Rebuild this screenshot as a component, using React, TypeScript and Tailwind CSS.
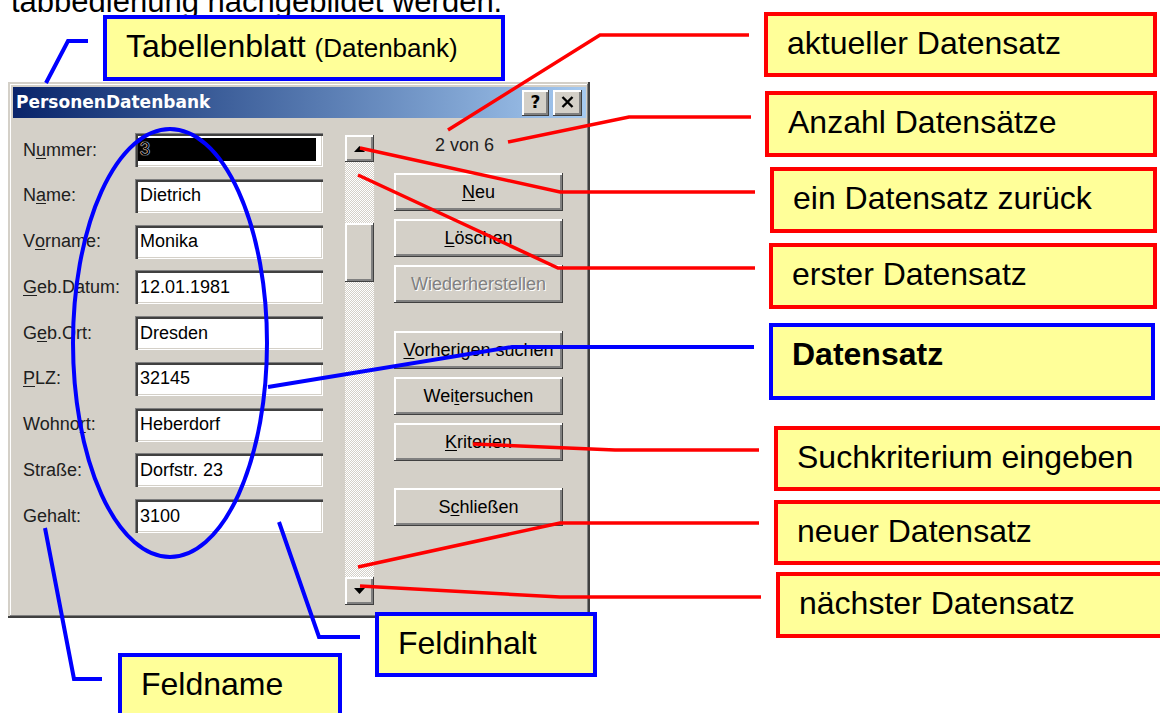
import React from 'react';

// Win2000 style borders
const raised = 'shadow-[inset_-1px_-1px_#404040,inset_2px_2px_#fff,inset_-3px_-3px_#808080]';
const sunken = 'shadow-[inset_1px_1px_#808080,inset_3px_3px_#404040,inset_-1px_-1px_#fff,inset_-2px_-2px_#d4d0c8]';
const frame = 'shadow-[inset_-2px_-2px_#404040,inset_2px_2px_#d4d0c8,inset_-3px_-3px_#808080,inset_3px_3px_#fff]';

const fields = [
  { label: 'Nummer:', key: 1, value: '3' },
  { label: 'Name:', key: 1, value: 'Dietrich' },
  { label: 'Vorname:', key: 1, value: 'Monika' },
  { label: 'Geb.Datum:', key: 0, value: '12.01.1981' },
  { label: 'Geb.Ort:', key: 1, value: 'Dresden' },
  { label: 'PLZ:', key: 0, value: '32145' },
  { label: 'Wohnort:', key: 5, value: 'Heberdorf' },
  { label: 'Straße:', key: -1, value: 'Dorfstr. 23' },
  { label: 'Gehalt:', key: -1, value: '3100' },
];

function Mnemonic({ text, at }: { text: string; at: number }) {
  if (at < 0) return <>{text}</>;
  return (
    <>
      {text.slice(0, at)}
      <span className="underline underline-offset-2">{text[at]}</span>
      {text.slice(at + 1)}
    </>
  );
}

function WinButton({ text, at, disabled, className = '' }: { text: string; at: number; disabled?: boolean; className?: string }) {
  return (
    <div className={`h-[38px] flex items-center justify-center bg-[#d4d0c8] ${raised} ${className}`}>
      {disabled ? (
        <span className="text-[#808080] [text-shadow:1px_1px_0_#fff]">{text}</span>
      ) : (
        <span className="text-black">
          <Mnemonic text={text} at={at} />
        </span>
      )}
    </div>
  );
}

function Arrow({ up }: { up?: boolean }) {
  return (
    <svg width="11" height="6" viewBox="0 0 11 6">
      {up ? <polygon points="0,6 11,6 5.5,0" fill="#000" /> : <polygon points="0,0 11,0 5.5,6" fill="#000" />}
    </svg>
  );
}

function Dialog() {
  return (
    <div className={`absolute left-[8px] top-[82px] w-[582px] h-[536px] bg-[#d4d0c8] ${frame} pt-[5px] pl-[5px] pr-[4px] font-['Liberation_Sans',Arial,sans-serif] text-[18px] text-black`}>
      {/* Title bar */}
      <div className="h-[31px] flex items-center justify-between pl-[3px] pr-[4px] bg-gradient-to-r from-[#0a246a] to-[#a6caf0]">
        <span className="font-['DejaVu_Sans',sans-serif] font-bold text-[17px] text-white leading-none">PersonenDatenbank</span>
        <div className="flex gap-[4px]">
          <div className={`w-[27px] h-[26px] bg-[#d4d0c8] ${raised} flex items-center justify-center font-['DejaVu_Sans',sans-serif] font-bold text-[17px] leading-none pb-[1px]`}>?</div>
          <div className={`w-[29px] h-[26px] bg-[#d4d0c8] ${raised} flex items-center justify-center pb-[1px]`}>
            <svg width="13" height="12" viewBox="0 0 13 12">
              <path d="M1.5 1 L11.5 11 M11.5 1 L1.5 11" stroke="#000" strokeWidth="2.4" />
            </svg>
          </div>
        </div>
      </div>

      {/* Body */}
      <div className="flex items-start pt-[15px] pl-[10px]">
        <div className="grid grid-cols-[112px_188px] gap-y-[11.75px]">
          {fields.map((f, i) => (
            <React.Fragment key={f.label}>
              <div className="h-[34px] flex items-center text-[#202020]">
                <Mnemonic text={f.label} at={f.key} />
              </div>
              <div className={`h-[34px] bg-white ${sunken} flex ${i === 0 ? '' : 'items-center pl-[5px]'}`}>
                {i === 0 ? (
                  <div className="mt-[5px] ml-[3px] mr-[7px] h-[23px] flex-1 bg-black pl-[2px] flex items-center">
                    <span className="text-black [text-shadow:0_0_1px_#fff,0_0_1px_#fff,0_0_1px_#fff]">{f.value}</span>
                  </div>
                ) : (
                  <span>{f.value}</span>
                )}
              </div>
            </React.Fragment>
          ))}
        </div>

        {/* Scrollbar */}
        <div className="ml-[22px] mt-[2px] w-[29px] h-[470px] flex flex-col">
          <div className={`h-[27px] bg-[#d4d0c8] ${raised} flex items-center justify-center`}>
            <Arrow up />
          </div>
          <div className="flex-1 bg-[image:repeating-conic-gradient(#fff_0_25%,#d4d0c8_0_50%)] bg-[length:2px_2px]">
            <div className={`mt-[61px] h-[59px] bg-[#d4d0c8] ${raised}`} />
          </div>
          <div className={`h-[28px] bg-[#d4d0c8] ${raised} flex items-center justify-center`}>
            <Arrow />
          </div>
        </div>

        {/* Buttons */}
        <div className="ml-[20px] w-[169px] flex flex-col">
          <div className="h-[24px] flex items-center pl-[41px] text-[#202020]">2 von 6</div>
          <div className="mt-[16px] flex flex-col gap-[8px]">
            <WinButton text="Neu" at={0} />
            <WinButton text="Löschen" at={0} />
            <WinButton text="Wiederherstellen" at={-1} disabled />
          </div>
          <div className="mt-[28px] flex flex-col gap-[8px]">
            <WinButton text="Vorherigen suchen" at={0} />
            <WinButton text="Weitersuchen" at={3} />
            <WinButton text="Kriterien" at={0} />
          </div>
          <WinButton text="Schließen" at={1} className="mt-[27px]" />
        </div>
      </div>
    </div>
  );
}

function Callout({ className, children }: { className: string; children: React.ReactNode }) {
  return (
    <div className={`absolute bg-[#ffff99] border-4 pl-[19px] pt-[9px] whitespace-nowrap text-[32px] leading-[36px] text-black ${className}`}>
      {children}
    </div>
  );
}

export default function App() {
  const red = '#ff0000';
  const blue = '#0000ff';
  const redLines = [
    '448,130 600,35 749,35',
    '508,142 629,117 751,117',
    '360,148 560,192 755,192',
    '358,175 558,268 755,268',
    '473,444 615,450 759,450',
    '358,567 560,523 759,523',
    '360,586 560,597 761,597',
  ];
  const blueLines = [
    '268,387 512,347 754,347',
    '279,522 319,637 360,637',
    '45,528 74,679 102,679',
    '46,83 68,41 88,41',
  ];

  return (
    <div className="relative w-[1160px] h-[713px] overflow-hidden bg-white font-['Liberation_Sans',Arial,sans-serif]">
      {/* slide text, cut off at the top */}
      <div className="absolute left-[11px] top-[-21px] text-[31px] text-black whitespace-nowrap">
        tabbedienung nachgebildet werden.
      </div>

      <Dialog />

      <svg className="absolute left-0 top-0 pointer-events-none" width="1160" height="713" viewBox="0 0 1160 713">
        <ellipse cx="170" cy="343" rx="97" ry="214" fill="none" stroke={blue} strokeWidth="4" />
        {redLines.map((p) => (
          <polyline key={p} points={p} fill="none" stroke={red} strokeWidth="3.5" />
        ))}
        {blueLines.map((p) => (
          <polyline key={p} points={p} fill="none" stroke={blue} strokeWidth="4" />
        ))}
      </svg>

      <Callout className="left-[103px] top-[15px] w-[402px] h-[66px] border-[#0000ff]">
        Tabellenblatt <span className="text-[26px]">(Datenbank)</span>
      </Callout>
      <Callout className="left-[764px] top-[12px] w-[393px] h-[65px] border-[#ff0000]">aktueller Datensatz</Callout>
      <Callout className="left-[765px] top-[91px] w-[392px] h-[66px] border-[#ff0000]">Anzahl Datensätze</Callout>
      <Callout className="left-[770px] top-[167px] w-[387px] h-[66px] border-[#ff0000]">ein Datensatz zurück</Callout>
      <Callout className="left-[769px] top-[243px] w-[388px] h-[66px] border-[#ff0000]">erster Datensatz</Callout>
      <Callout className="left-[769px] top-[323px] w-[386px] h-[77px] border-[#0000ff] font-bold">Datensatz</Callout>
      <Callout className="left-[774px] top-[426px] w-[400px] h-[65px] border-[#ff0000]">Suchkriterium eingeben</Callout>
      <Callout className="left-[774px] top-[500px] w-[400px] h-[65px] border-[#ff0000]">neuer Datensatz</Callout>
      <Callout className="left-[776px] top-[572px] w-[400px] h-[66px] border-[#ff0000]">nächster Datensatz</Callout>
      <Callout className="left-[375px] top-[612px] w-[222px] h-[65px] border-[#0000ff]">Feldinhalt</Callout>
      <Callout className="left-[118px] top-[653px] w-[224px] h-[80px] border-[#0000ff]">Feldname</Callout>
    </div>
  );
}
